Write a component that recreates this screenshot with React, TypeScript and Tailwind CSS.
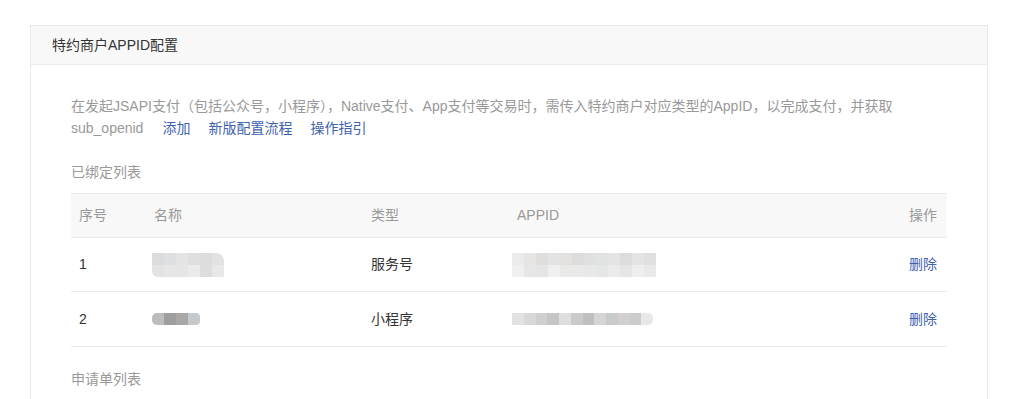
import React from "react";

const FONT = { fontFamily: '"Liberation Sans", Arial, "Noto Sans CJK SC", sans-serif' };

function Blur({ rows, w = 12, h = 12, className = "" }: { rows: string[][]; w?: number; h?: number; className?: string }) {
  return (
    <div className={"inline-flex flex-col overflow-hidden " + className}>
      {rows.map((r, i) => (
        <div key={i} className="flex">
          {r.map((c, j) => (
            <div key={j} style={{ width: w, height: h, background: c }} />
          ))}
        </div>
      ))}
    </div>
  );
}

const name1 = [
  ["#dcdcdc", "#dedfe0", "#e4e4e4", "#dfdfe0", "#dcdddd", "#e2e2e2"],
  ["#e3e3e3", "#e6e6e6", "#e5e5e5", "#eaebec", "#dddddd", "#e8e8e8"],
];
const name2 = [["#bdbcba", "#9e9e9e", "#a9a8a6", "#c6c9cc"]];
const app1 = [
  ["#ebebeb", "#e6e5e4", "#dfdedd", "#e2e3e4", "#e3e1df", "#dcdcdc", "#e0e0e0", "#e1e2e2", "#e4e4e4", "#dddcdd", "#e4e4e4", "#e0e0e0"],
  ["#f0f0f0", "#e6e6e6", "#e6e5e4", "#eef0f1", "#ebe9e7", "#e8e9e9", "#e8e8e8", "#e5e6e7", "#ecebea", "#e6e5e6", "#eeeeed", "#e8e9e9"],
];
const app2 = [["#e3e2e1", "#d6d8da", "#d0cfcf", "#c5c5c5", "#dcdee0", "#cacaca", "#bfbfc0", "#d5d5d5", "#c9cbca", "#d1d0ce", "#cdcccd", "#e8e8e8"]];

export default function App() {
  return (
    <div className="min-h-[399px] bg-white pt-[25px] pl-[30px]" style={FONT}>
      <div className="w-[958px] border border-[#e9e9e9] bg-white">
        <div className="h-[39px] flex items-center pl-[21px] border-b border-[#ebebeb] bg-[#f8f8f8] text-[14px] text-[#333]">
          特约商户APPID配置
        </div>
        <div className="px-[40px] pt-[30px] pb-[20px]">
          <div className="text-[14px] leading-[22px] text-[#999]">
            <div className="whitespace-nowrap">
              在发起JSAPI支付（包括公众号，小程序），Native支付、App支付等交易时，需传入特约商户对应类型的AppID，以完成支付，并获取
            </div>
            <div className="flex gap-[18px]">
              <span>sub_openid</span>
              <a className="ml-[1px] text-[#3f62ae]">添加</a>
              <a className="text-[#3f62ae]">新版配置流程</a>
              <a className="text-[#3f62ae]">操作指引</a>
            </div>
          </div>
          <div className="mt-[22px] text-[14px] leading-[22px] text-[#999]">已绑定列表</div>
          <div className="mt-[10px] w-[876px] text-[14px]">
            <div className="grid grid-cols-[75px_217px_146px_1fr_auto] h-[45px] items-center border-y border-[#ebebeb] bg-[#f8f8f8] text-[#999]">
              <div className="pl-[8px]">序号</div>
              <div className="pl-[8px]">名称</div>
              <div className="pl-[8px]">类型</div>
              <div className="pl-[8px]">APPID</div>
              <div className="pr-[10px] text-right">操作</div>
            </div>
            <div className="grid grid-cols-[75px_217px_146px_1fr_auto] h-[54px] items-center border-b border-[#ebebeb] text-[#333]">
              <div className="pl-[8px]">1</div>
              <div className="pl-[6px] flex">
                <Blur rows={name1} h={12} className="rounded-tr-[8px] rounded-bl-[6px]" />
              </div>
              <div className="pl-[8px]">服务号</div>
              <div className="pl-[3px] flex">
                <Blur rows={app1} h={12} />
              </div>
              <div className="pr-[10px] text-right text-[#3f62ae]">删除</div>
            </div>
            <div className="grid grid-cols-[75px_217px_146px_1fr_auto] h-[55px] items-center border-b border-[#ebebeb] text-[#333]">
              <div className="pl-[8px]">2</div>
              <div className="pl-[6px] flex">
                <Blur rows={name2} h={12} className="rounded-l-[5px] rounded-r-[4px]" />
              </div>
              <div className="pl-[8px]">小程序</div>
              <div className="pl-[3px] flex">
                <Blur rows={app2} w={12} h={12} className="rounded-r-[5px] w-[141px]" />
              </div>
              <div className="pr-[10px] text-right text-[#3f62ae]">删除</div>
            </div>
          </div>
          <div className="mt-[21px] text-[14px] leading-[22px] text-[#999]">申请单列表</div>
        </div>
      </div>
    </div>
  );
}
